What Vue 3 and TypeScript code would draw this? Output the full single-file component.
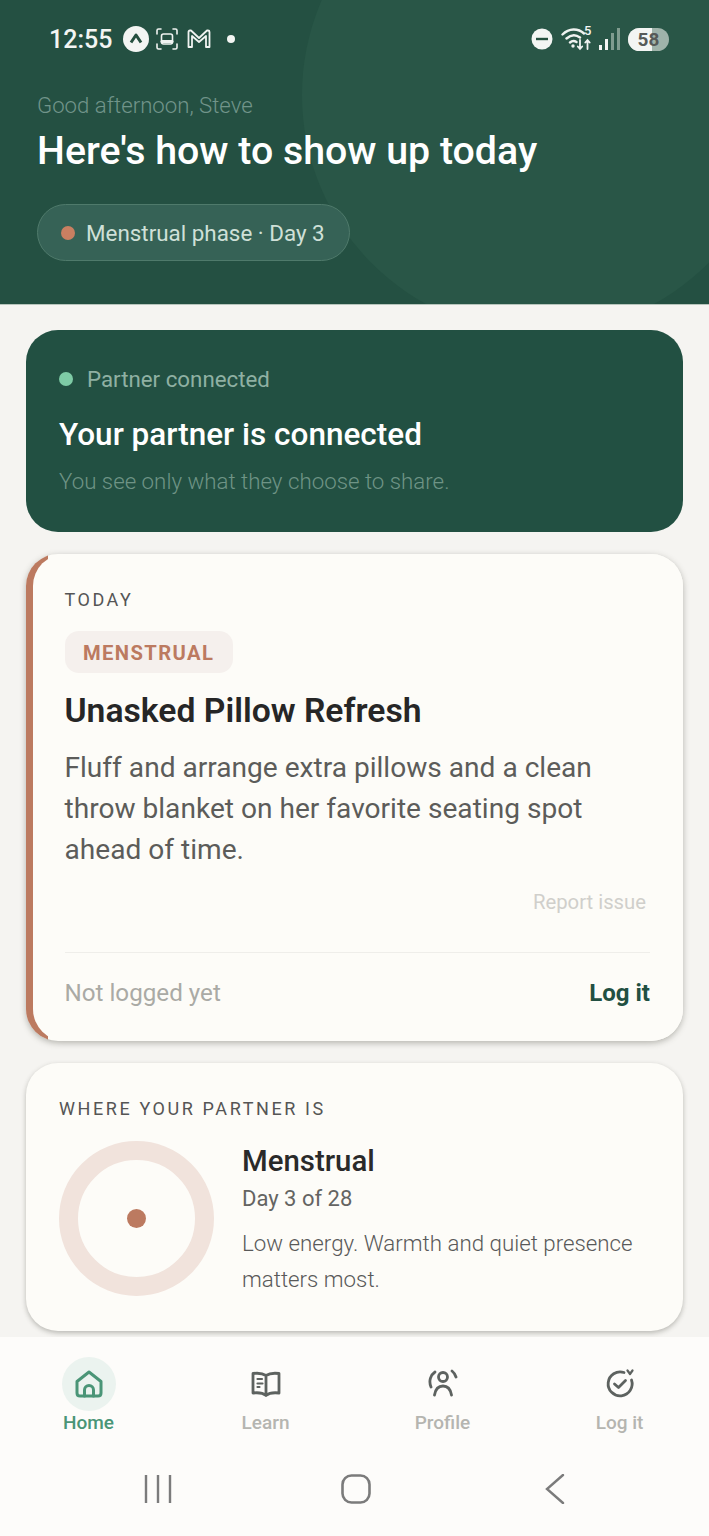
<script setup lang="ts">
type Tab = { label: string; active?: boolean }

const tabs: Tab[] = [
  { label: 'Home', active: true },
  { label: 'Learn' },
  { label: 'Profile' },
  { label: 'Log it' },
]
</script>

<template>
  <div class="screen">
    <header class="hero">
      <div class="hero-circle"></div>
      <div class="status">
        <div class="status-left">
          <span class="time">12:55</span>
          <svg class="st-a" width="26" height="26" viewBox="0 0 26 26">
            <circle cx="13" cy="13" r="13" fill="#f3f5f3" />
            <path d="M8 16.5 13 9l5 7.5" fill="none" stroke="#25503f" stroke-width="3" stroke-linejoin="round" />
          </svg>
          <svg class="st-b" width="24" height="24" viewBox="0 0 24 24" fill="none" stroke="#f0f3f1" stroke-width="1.6" stroke-linecap="round">
            <path d="M2 7V3.5Q2 2 3.5 2H6M18 2h2.500Q22 2 22 3.500V7M2 17v3.500Q2 22 3.500 22H6M18 22h2.500Q22 22 22 20.500V17" />
            <rect x="6.500" y="7" width="11" height="10" rx="2" />
            <path d="M7 14.500h10" stroke-width="3" />
          </svg>
          <svg class="st-m" width="24" height="20" viewBox="0 0 24 20" fill="none" stroke="#f0f3f1" stroke-width="1.800" stroke-linejoin="round">
            <path d="M1.500 18V3Q1.500 1.500 3 1.500h1L12 9l8-7.500h1Q22.500 1.500 22.500 3v15h-3.500V7l-7 6-7-6v11z" />
          </svg>
          <span class="st-dot"></span>
        </div>
        <div class="status-right">
          <svg width="22" height="22" viewBox="0 0 22 22">
            <circle cx="11" cy="11" r="10.500" fill="#f3f5f3" />
            <rect x="5" y="9.800" width="12" height="2.400" fill="#25503f" />
          </svg>
          <svg class="st-wifi" width="32" height="26" viewBox="0 0 32 26" fill="none" stroke="#f0f3f1" stroke-width="2.400" stroke-linecap="round">
            <path d="M1.500 8.500C8 2 17 2 23 7.500M5.500 12.500C10 8.500 15 8.500 19 11.500M9 16.500c2-1.800 4.500-1.800 6.500-.5" />
            <circle cx="12" cy="20" r="1.700" fill="#f0f3f1" stroke="none" />
            <path d="M19 14v9M16.800 20.500 19 23l2.200-2.500M26.500 23v-9M24.300 16.500 26.500 14l2.200 2.500" stroke-width="1.800" />
          </svg>
          <span class="st-five">5</span>
          <div class="signal">
            <i class="on s1"></i><i class="on s2"></i><i class="s3"></i><i class="s4"></i>
          </div>
          <div class="battery"><span class="battery-fill"></span><span class="battery-num">58</span></div>
        </div>
      </div>
      <p class="greeting">Good afternoon, Steve</p>
      <h1 class="headline">Here's how to show up today</h1>
      <div class="phase-pill">
        <span class="phase-dot"></span>
        <span>Menstrual phase · Day 3</span>
      </div>
    </header>

    <main class="content">
      <section class="connected">
        <div class="connected-top">
          <span class="connected-dot"></span>
          <span>Partner connected</span>
        </div>
        <h2 class="connected-title">Your partner is connected</h2>
        <p class="connected-sub">You see only what they choose to share.</p>
      </section>

      <section class="today">
        <div class="today-inner">
          <div class="eyebrow today-label">TODAY</div>
          <span class="tag">MENSTRUAL</span>
          <h2 class="today-title">Unasked Pillow Refresh</h2>
          <p class="today-body">Fluff and arrange extra pillows and a clean throw blanket on her favorite seating spot ahead of time.</p>
          <div class="report">Report issue</div>
          <div class="today-foot">
            <span class="not-logged">Not logged yet</span>
            <span class="log-link">Log it</span>
          </div>
        </div>
      </section>

      <section class="where">
        <div class="eyebrow where-label">WHERE YOUR PARTNER IS</div>
        <div class="where-row">
          <div class="ring"><span class="ring-dot"></span></div>
          <div class="where-text">
            <div class="where-phase">Menstrual</div>
            <div class="where-day">Day 3 of 28</div>
            <p class="where-desc">Low energy. Warmth and quiet presence matters most.</p>
          </div>
        </div>
      </section>
    </main>

    <nav class="tabbar">
      <div v-for="tab in tabs" :key="tab.label" class="tab" :class="{ active: tab.active }">
        <div class="tab-icon">
          <svg v-if="tab.label === 'Home'" width="30" height="30" viewBox="0 0 30 30" fill="none" stroke="#4a9577" stroke-width="3" stroke-linejoin="round" stroke-linecap="round">
            <path d="M15 3 3 12.500V24q0 3 3 3h18q3 0 3-3V12.500z" />
            <path d="M10.500 27v-6a4.500 4.500 0 0 1 9 0v6" />
          </svg>
          <svg v-else-if="tab.label === 'Learn'" width="30" height="30" viewBox="0 0 30 30" fill="none" stroke="#5d625f" stroke-width="2.800" stroke-linejoin="round" stroke-linecap="round">
            <path d="M15 6.500C12 4.500 6 4 2 4.500V24c4-.5 10 0 13 2.500 3-2.500 9-3 13-2.500V4.500C24 4 18 4.500 15 6.500zM15 6.500v20" />
            <path d="M6.500 10h4.500M6.500 14.500h5M6.500 18h2" stroke-width="2.200" />
          </svg>
          <svg v-else-if="tab.label === 'Profile'" width="30" height="30" viewBox="0 0 30 30" fill="none" stroke="#5d625f" stroke-width="2.800" stroke-linecap="round">
            <circle cx="15" cy="8" r="4.500" />
            <path d="M6.500 26c1-6 4.500-9 8.500-9s7.500 3 8.500 9M7 3C2.500 6 .500 12 3 18M24 2c2 1.500 3 3 4 6" />
          </svg>
          <svg v-else width="30" height="30" viewBox="0 0 30 30" fill="none" stroke="#5d625f" stroke-width="2.800" stroke-linecap="round" stroke-linejoin="round">
            <path d="M19 3.500A12 12 0 1 0 26.500 11" />
            <path d="M9.500 15l4 3.500 7-7" />
            <path d="M22.500 1.500 25 5l2.500-3.500" stroke-width="2.200" />
          </svg>
        </div>
        <span class="tab-label">{{ tab.label }}</span>
      </div>
    </nav>

    <div class="sysnav">
      <svg width="28" height="28" viewBox="0 0 28 28" fill="none" stroke="#7b7b7b" stroke-width="2.400">
        <path d="M2 0v28M14 0v28M26 0v28" />
      </svg>
      <svg class="sys-home" width="30" height="30" viewBox="0 0 30 30" fill="none" stroke="#7b7b7b" stroke-width="2.600">
        <rect x="1.500" y="1.500" width="27" height="27" rx="9" />
      </svg>
      <svg width="20" height="30" viewBox="0 0 20 30" fill="none" stroke="#7b7b7b" stroke-width="2.400" stroke-linecap="round">
        <path d="M18 1 2 15l16 14" />
      </svg>
    </div>
  </div>
</template>

<style scoped>
.screen {
  width: 709px;
  height: 1536px;
  overflow: hidden;
  background: #f5f4f1;
  font-family: Roboto, "Liberation Sans", sans-serif;
  display: flex;
  flex-direction: column;
}
.hero {
  position: relative;
  height: 305px;
  flex: none;
  box-sizing: border-box;
  padding: 0 37px;
  background: #245042;
  overflow: hidden;
  border-bottom: 1px solid #b7c5bc;
}
.hero-circle {
  position: absolute;
  left: 302px;
  top: -143px;
  width: 476px;
  height: 476px;
  border-radius: 50%;
  background: #295647;
}
.status {
  position: relative;
  height: 78px;
  display: flex;
  align-items: center;
  justify-content: space-between;
  padding: 0 3px 2px 12px;
  color: #f3f5f3;
}
.status-left {
  display: flex;
  align-items: center;
}
.time {
  font-size: 25px;
  font-weight: 500;
  margin-right: 11px;
}
.st-b {
  margin-left: 6px;
}
.st-m {
  margin-left: 8px;
}
.st-dot {
  width: 8px;
  height: 8px;
  margin-left: 16px;
  border-radius: 50%;
  background: #f3f5f3;
}
.status-right {
  position: relative;
  display: flex;
  align-items: center;
}
.st-wifi {
  margin-left: 8px;
}
.st-five {
  position: absolute;
  left: 53px;
  top: -3px;
  font-size: 13px;
  font-weight: 500;
}
.signal {
  display: flex;
  align-items: flex-end;
  gap: 3px;
  height: 22px;
  margin-left: 6px;
}
.signal i {
  display: block;
  width: 3px;
  background: #7f9c8f;
}
.signal i.on {
  background: #f3f5f3;
}
.s1 { height: 5px; }
.s2 { height: 11px; }
.s3 { height: 17px; }
.s4 { height: 22px; }
.battery {
  position: relative;
  width: 41px;
  height: 23px;
  margin-left: 8px;
  border-radius: 12px;
  background: #9fb3aa;
  overflow: hidden;
  color: #565a58;
  text-align: center;
}
.battery-fill {
  position: absolute;
  left: 0;
  top: 0;
  width: 24px;
  height: 23px;
  background: #f3f5f3;
}
.battery-num {
  position: relative;
  font-size: 19px;
  font-weight: 700;
  line-height: 23px;
}
.greeting {
  position: relative;
  margin: 11px 0 0;
  font-size: 22.200px;
  font-weight: 300;
  line-height: 28px;
  color: #71948a;
}
.headline {
  position: relative;
  margin: 9px 0 0;
  font-size: 39.300px;
  font-weight: 500;
  line-height: 46px;
  color: #fff;
}
.phase-pill {
  position: relative;
  box-sizing: border-box;
  width: 313px;
  height: 57px;
  margin-top: 30px;
  padding-left: 23px;
  display: flex;
  align-items: center;
  gap: 11px;
  border: 1.500px solid #4f7a6b;
  border-radius: 29px;
  background: #366256;
  font-size: 22.400px;
  color: #cfe0d8;
}
.phase-dot {
  width: 14px;
  height: 14px;
  border-radius: 50%;
  background: #c97f61;
}
.content {
  flex: 1;
  min-height: 0;
  padding: 25px 26px 0;
  display: flex;
  flex-direction: column;
  gap: 22px;
}
.connected {
  box-sizing: border-box;
  height: 202px;
  padding: 35px 33px 0;
  border-radius: 32px;
  background: #225042;
}
.connected-top {
  display: flex;
  align-items: center;
  gap: 14px;
  font-size: 22.300px;
  line-height: 28px;
  color: #8fb0a3;
}
.connected-dot {
  width: 14px;
  height: 14px;
  border-radius: 50%;
  background: #7ecba6;
}
.connected-title {
  margin: 23px 0 0;
  font-size: 31.500px;
  font-weight: 500;
  line-height: 38px;
  color: #fff;
}
.connected-sub {
  margin: 13px 0 0;
  font-size: 22.300px;
  font-weight: 300;
  line-height: 28px;
  color: #6f9486;
}
.today {
  position: relative;
  box-sizing: border-box;
  height: 487px;
  border-radius: 32px;
  background: #fdfcf8;
  box-shadow: 0 2px 6px rgba(60, 60, 50, 0.35);
}
/* accent strip stops short of the corner curve */
.today::before {
  content: "";
  position: absolute;
  inset: 0;
  border-radius: 32px;
  background: #bc7a60;
  clip-path: inset(0 calc(100% - 22px) 0 0);
}
.today-inner {
  position: relative;
  box-sizing: border-box;
  height: 100%;
  margin-left: 7px;
  padding: 34px 33px 0 31.500px;
  border-radius: 32px;
  background: #fdfcf8;
}
.eyebrow {
  font-weight: 400;
  color: #555;
  line-height: 24px;
}
.today-label {
  font-size: 18px;
  letter-spacing: 2.500px;
}
.tag {
  display: inline-block;
  margin-top: 19px;
  padding: 0 18.500px;
  height: 42px;
  line-height: 44px;
  border-radius: 14px;
  background: #f5f0ed;
  color: #bc7a60;
  font-size: 20.200px;
  font-weight: 700;
  letter-spacing: 1.400px;
}
.today-title {
  margin: 16px 0 0;
  font-size: 33.700px;
  font-weight: 600;
  line-height: 44px;
  color: #262626;
}
.today-body {
  margin: 14px 0 0;
  font-size: 28.100px;
  line-height: 41px;
  color: #5c5c5a;
}
.report {
  margin-top: 19px;
  padding-right: 4px;
  text-align: right;
  font-size: 20.300px;
  line-height: 26px;
  color: #d0cfcb;
}
.today-foot {
  margin-top: 37px;
  padding-top: 23px;
  border-top: 1px solid #efeeea;
  display: flex;
  justify-content: space-between;
  align-items: center;
  line-height: 34px;
}
.not-logged {
  font-size: 24.200px;
  color: #aaaaa5;
}
.log-link {
  font-size: 24px;
  font-weight: 700;
  color: #225042;
}
.where {
  box-sizing: border-box;
  height: 268px;
  padding: 34px 33px 0;
  border-radius: 32px;
  background: #fdfcf8;
  box-shadow: 0 2px 5px rgba(60, 60, 50, 0.32);
  flex: none;
}
.where-label {
  font-size: 18px;
  letter-spacing: 2.600px;
}
.where-row {
  margin-top: 20px;
  display: flex;
  gap: 28px;
}
.ring {
  box-sizing: border-box;
  flex: none;
  width: 155px;
  height: 155px;
  border: 19px solid #f1e3dc;
  border-radius: 50%;
  display: flex;
  align-items: center;
  justify-content: center;
}
.ring-dot {
  width: 19px;
  height: 19px;
  border-radius: 50%;
  background: #bc7a60;
}
.where-phase {
  font-size: 29.400px;
  font-weight: 500;
  line-height: 40px;
  color: #2a2a2a;
}
.where-day {
  margin-top: 3px;
  font-size: 22px;
  font-weight: 400;
  line-height: 30px;
  color: #646462;
}
.where-desc {
  margin: 12px 0 0;
  font-size: 22.300px;
  font-weight: 300;
  line-height: 35.500px;
  color: #595959;
}
.tabbar {
  position: absolute;
  left: 0;
  top: 1337px;
  width: 709px;
  height: 104px;
  box-sizing: border-box;
  display: grid;
  grid-template-columns: repeat(4, 177px);
  background: #fdfcfa;
}
.tab {
  display: flex;
  flex-direction: column;
  align-items: center;
  padding-top: 20px;
}
.tab-icon {
  width: 54px;
  height: 54px;
  display: flex;
  align-items: center;
  justify-content: center;
  border-radius: 50%;
}
.tab.active .tab-icon {
  background: #ebf3ef;
}
.tab-label {
  font-size: 19px;
  font-weight: 500;
  line-height: 24px;
  color: #b5b5b0;
}
.tab.active .tab-label {
  color: #4a9577;
}
.sysnav {
  position: absolute;
  left: 0;
  top: 1441px;
  width: 709px;
  height: 95px;
  box-sizing: border-box;
  padding-left: 144px;
  display: flex;
  align-items: center;
  gap: 169px;
  background: #fdfcfa;
}
.sys-home {
  margin-right: 5px;
}
</style>

<style>
body {
  margin: 0;
}
</style>
